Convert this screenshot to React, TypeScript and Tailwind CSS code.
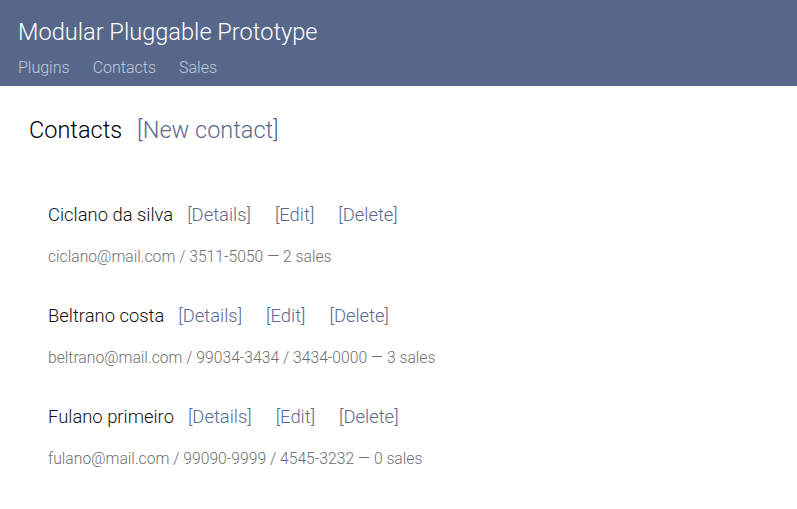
const contacts = [
  { name: "Ciclano da silva", email: "ciclano@mail.com", phones: ["3511-5050"], sales: 2 },
  { name: "Beltrano costa", email: "beltrano@mail.com", phones: ["99034-3434", "3434-0000"], sales: 3 },
  { name: "Fulano primeiro", email: "fulano@mail.com", phones: ["99090-9999", "4545-3232"], sales: 0 },
];

export default function App() {
  return (
    <div className="min-h-screen bg-white font-['Roboto',sans-serif] font-light">
      <header className="h-[86px] bg-[#56678a] px-[18px] pt-[16px]">
        <h1 className="text-[23.6px] leading-[32px] text-white font-light">
          Modular Pluggable Prototype
        </h1>
        <nav className="mt-[10px] flex gap-[23px] text-[16px] leading-[20px] text-[#c3cadb]">
          <a>Plugins</a>
          <a>Contacts</a>
          <a>Sales</a>
        </nav>
      </header>

      <main className="px-[29px] pt-[28px]">
        <h2 className="flex gap-[15px] text-[23.5px] leading-[32px] font-light">
          <span className="text-black">Contacts</span>
          <a className="text-[#5b6a8e]">[New contact]</a>
        </h2>

        <ul className="mt-[56px] pl-[19px]">
          {contacts.map((c) => (
            <li key={c.name} className="mb-[36px]">
              <div className="flex text-[18.4px] leading-[26px]">
                <span className="text-[#111]">{c.name}</span>
                <a className="ml-[14px] text-[#5b6a8e]">[Details]</a>
                <a className="ml-[24px] text-[#5b6a8e]">[Edit]</a>
                <a className="ml-[24px] text-[#5b6a8e]">[Delete]</a>
              </div>
              <div className="mt-[19px] text-[15.7px] leading-[20px] text-[#6f6f6f]">
                {c.email} / {c.phones.join(" / ")} — {c.sales} sales
              </div>
            </li>
          ))}
        </ul>
      </main>
    </div>
  );
}
